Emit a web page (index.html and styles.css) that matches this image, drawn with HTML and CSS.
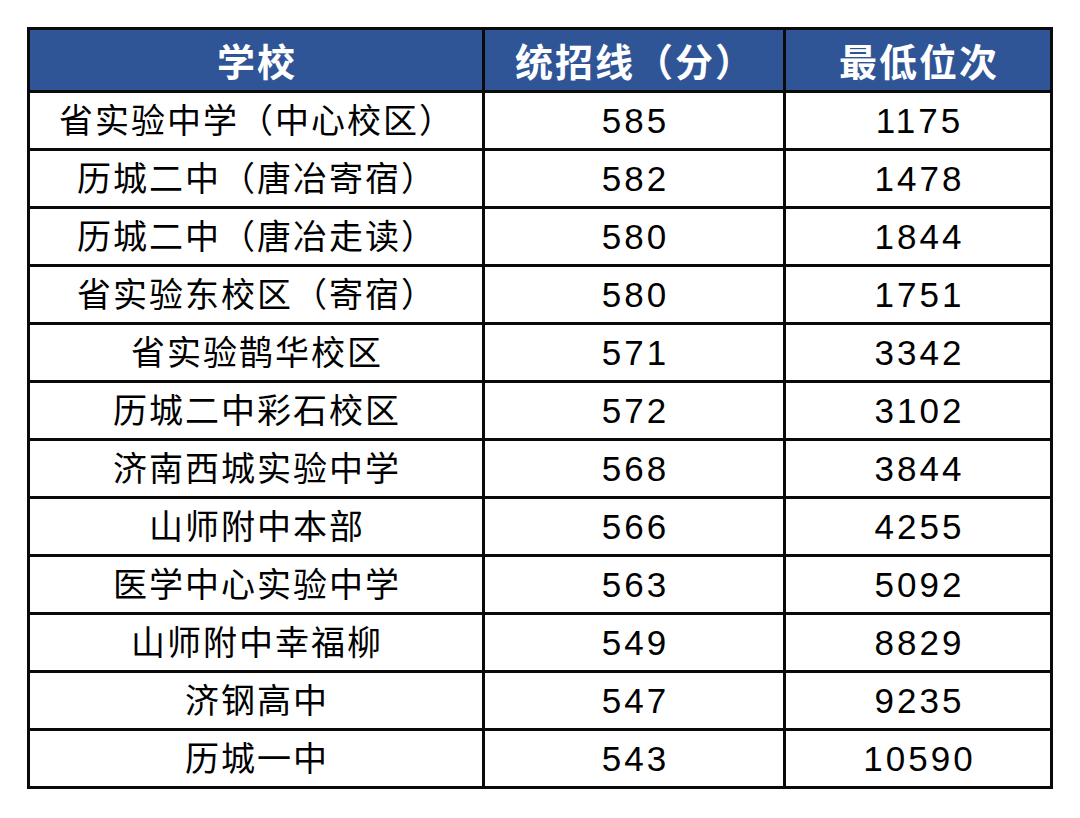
FILE: index.html
```html
<!DOCTYPE html>
<html lang="zh-CN">
<head>
<meta charset="utf-8">
<title>学校统招线</title>
<link rel="stylesheet" href="styles.css">
</head>
<body>
<table class="score-table">
  <colgroup>
    <col class="col-school">
    <col class="col-score">
    <col class="col-rank">
  </colgroup>
  <thead>
    <tr>
      <th>学校</th>
      <th>统招线（分）</th>
      <th>最低位次</th>
    </tr>
  </thead>
  <tbody>
    <tr><td>省实验中学（中心校区）</td><td class="num">585</td><td class="num">1175</td></tr>
    <tr><td>历城二中（唐冶寄宿）</td><td class="num">582</td><td class="num">1478</td></tr>
    <tr><td>历城二中（唐冶走读）</td><td class="num">580</td><td class="num">1844</td></tr>
    <tr><td>省实验东校区（寄宿）</td><td class="num">580</td><td class="num">1751</td></tr>
    <tr><td>省实验鹊华校区</td><td class="num">571</td><td class="num">3342</td></tr>
    <tr><td>历城二中彩石校区</td><td class="num">572</td><td class="num">3102</td></tr>
    <tr><td>济南西城实验中学</td><td class="num">568</td><td class="num">3844</td></tr>
    <tr><td>山师附中本部</td><td class="num">566</td><td class="num">4255</td></tr>
    <tr><td>医学中心实验中学</td><td class="num">563</td><td class="num">5092</td></tr>
    <tr><td>山师附中幸福柳</td><td class="num">549</td><td class="num">8829</td></tr>
    <tr><td>济钢高中</td><td class="num">547</td><td class="num">9235</td></tr>
    <tr><td>历城一中</td><td class="num">543</td><td class="num">10590</td></tr>
  </tbody>
</table>
</body>
</html>
```

FILE: styles.css
```css
html, body {
  margin: 0;
  padding: 0;
  background: #ffffff;
}

body {
  font-family: "Liberation Sans", "Noto Sans CJK SC", sans-serif;
  color: #000000;
}

.score-table {
  margin: 27px 0 0 27px;
  width: 1026px;
  table-layout: fixed;
  border-collapse: separate;
  border-spacing: 3px;
  background: #0a0a0a;
}

.col-school { width: 452px; }
.col-score { width: 298px; }
.col-rank { width: 264px; }

.score-table th,
.score-table td {
  padding: 0;
  text-align: center;
  vertical-align: middle;
  white-space: nowrap;
}

.score-table th {
  height: 60px;
  padding-left: 2px;
  background: #2f5597;
  color: #ffffff;
  font-family: "Noto Sans CJK SC", sans-serif;
  font-weight: 700;
  font-size: 38px;
  letter-spacing: 2px;
  line-height: 1;
}

.score-table td {
  height: 55px;
  padding-left: 2px;
  background: #ffffff;
  font-size: 34px;
  line-height: 1;
  letter-spacing: 2px;
}

.score-table td.num {
  padding-left: 3px;
  font-size: 35px;
  letter-spacing: 3px;
}
```
